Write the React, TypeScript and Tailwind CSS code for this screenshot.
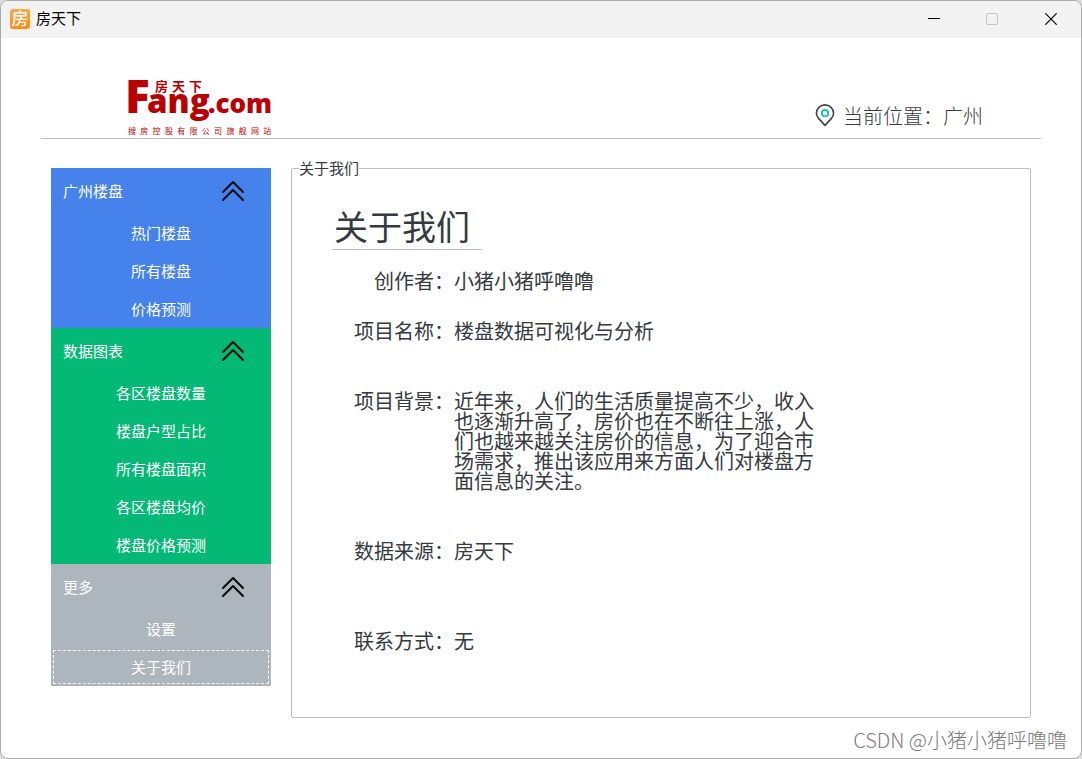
import { useState } from "react"

const groups = [
  {
    title: "广州楼盘",
    bg: "bg-[#4682eb]",
    items: ["热门楼盘", "所有楼盘", "价格预测"],
  },
  {
    title: "数据图表",
    bg: "bg-[#04b976]",
    items: ["各区楼盘数量", "楼盘户型占比", "所有楼盘面积", "各区楼盘均价", "楼盘价格预测"],
  },
  {
    title: "更多",
    bg: "bg-[#adb5bd]",
    items: ["设置", "关于我们"],
  },
]

const details = [
  { label: "创作者：", value: "小猪小猪呼噜噜", space: "mt-[21px]" },
  { label: "项目名称：", value: "楼盘数据可视化与分析", space: "mt-[30px]" },
  {
    label: "项目背景：",
    value:
      "近年来，人们的生活质量提高不少，收入也逐渐升高了，房价也在不断往上涨，人们也越来越关注房价的信息，为了迎合市场需求，推出该应用来方面人们对楼盘方面信息的关注。",
    space: "mt-[50px]",
  },
  { label: "数据来源：", value: "房天下", space: "mt-[50px]" },
  { label: "联系方式：", value: "无", space: "mt-[70px]" },
]

function TitleBar() {
  return (
    <div className="h-[37px] pb-0.5 bg-[#f3f3f3] flex items-center justify-between pl-[9px]">
      <div className="flex items-center gap-1.5">
        {/* App icon */}
        <svg className="w-5 h-5 overflow-visible" viewBox="0 0 20 20" aria-hidden="true">
          <defs>
            <linearGradient id="appIcon" x1="0" y1="0" x2="0" y2="1">
              <stop offset="0" stopColor="#f9a94b" />
              <stop offset="1" stopColor="#ff8a0c" />
            </linearGradient>
          </defs>
          <rect width="20" height="20" rx="3" fill="url(#appIcon)" />
          <text x="10" y="16" textAnchor="middle" fontSize="17" fontWeight="500" fill="#fff">
            房
          </text>
        </svg>
        <span className="text-[15px] leading-5 pb-0.5 text-black">房天下</span>
      </div>

      {/* Window controls */}
      <div className="flex self-stretch">
        <button aria-label="最小化" className="w-[58px] flex items-center justify-center">
          <svg className="w-3 h-3" viewBox="0 0 12 12" shapeRendering="crispEdges">
            <rect y="5" width="12" height="1" fill="#000" />
          </svg>
        </button>
        <button aria-label="最大化" disabled className="w-[58px] flex items-center justify-center">
          <svg className="w-3 h-3" viewBox="0 0 12 12" fill="none" stroke="#c4c4c4">
            <rect x="0.5" y="0.5" width="11" height="11" rx="1" />
          </svg>
        </button>
        <button aria-label="关闭" className="w-[60px] flex items-center justify-center">
          <svg className="w-3 h-3" viewBox="0 0 12 12" stroke="#000" strokeWidth="1.2">
            <path d="M0.3 0.3L11.7 11.7M11.7 0.3L0.3 11.7" />
          </svg>
        </button>
      </div>
    </div>
  )
}

function Logo() {
  return (
    <svg
      className="w-[150px] h-[60px] overflow-visible"
      viewBox="0 0 150 60"
      fill="#b90002"
      role="img"
      aria-label="房天下 Fang.com"
    >
      <g fontFamily="'Open Sans', sans-serif" fontWeight="800">
        <text x="0" y="39" fontSize="46">F</text>
        <text x="22" y="39" fontSize="33">ang</text>
        <text x="83" y="39" fontSize="26">.com</text>
      </g>
      <text x="30" y="17" fontSize="13" fontWeight="700">房</text>
      <text x="47" y="17" fontSize="13" fontWeight="700">天</text>
      <text x="64" y="17" fontSize="13" fontWeight="700">下</text>
      {"搜房控股有限公司旗舰网站".split("").map((c, i) => (
        <text key={i} x={3 + i * 12.3} y="60" fontSize="8">
          {c}
        </text>
      ))}
    </svg>
  )
}

export default function App() {
  const [active, setActive] = useState("关于我们")
  const [closed, setClosed] = useState<string[]>([])

  function toggle(title: string) {
    setClosed(closed.includes(title) ? closed.filter((t) => t !== title) : [...closed, title])
  }

  return (
    <div className="min-h-screen flex bg-[#dcdcdc] font-['Noto_Sans_CJK_SC',sans-serif]">
      <div className="flex-1 flex flex-col bg-white border border-[#ababab] rounded-lg overflow-hidden">
        <TitleBar />

        {/* Header */}
        <header className="mx-10 h-[101px] pl-[84px] pr-[58px] pt-9 flex justify-between border-b border-[#bdbdbd]">
          <Logo />
          <div className="flex items-center gap-2 self-end mb-2">
            <svg className="w-5 h-6" viewBox="0 0 20 24" fill="none">
              <path
                d="M10 21.4L3.8 14.6C2.2 12.8 1.4 11 1.4 9.2A8.6 8.3 0 0 1 18.6 9.2C18.6 11 17.8 12.8 16.2 14.6Z"
                stroke="#444"
                strokeWidth="1.6"
                strokeLinejoin="round"
              />
              <circle cx="10" cy="9.2" r="3.2" stroke="#1fc3a0" strokeWidth="1.8" />
            </svg>
            <span className="text-xl leading-7 font-light text-[#343a40]">当前位置：广州</span>
          </div>
        </header>

        <main className="flex-1 flex items-stretch gap-5 px-[50px] pt-[19px]">
          {/* Sidebar */}
          <nav className="w-[220px] shrink-0 mt-2.5 text-[15px] leading-5 text-white">
            {groups.map((group) => (
              <div key={group.title} className={group.bg}>
                <button
                  onClick={() => toggle(group.title)}
                  className="w-full h-[46px] pl-3 pr-[26px] flex items-center justify-between"
                >
                  <span>{group.title}</span>
                  <svg
                    className="w-6 h-6"
                    viewBox="0 0 24 24"
                    fill="none"
                    stroke="#0a0a0a"
                    strokeWidth="2"
                    strokeLinecap="round"
                    strokeLinejoin="round"
                  >
                    <path d="M2 13L12 3L22 13M2 21L12 11L22 21" />
                  </svg>
                </button>
                {!closed.includes(group.title) &&
                  group.items.map((item) => (
                    <button
                      key={item}
                      onClick={() => setActive(item)}
                      className={`block w-full h-[38px] text-center ${
                        item === active ? "outline-1 outline-dashed outline-white -outline-offset-3" : ""
                      }`}
                    >
                      {item}
                    </button>
                  ))}
              </div>
            ))}
          </nav>

          {/* Content */}
          <fieldset className="flex-1 min-w-0 pl-10 border border-[#bdbdbd] rounded-xs text-[#343a40]">
            <legend className="ml-[-33px] text-[15px] leading-5">关于我们</legend>
            <h1 className="w-[150px] mt-7 pb-[3px] pl-0.5 text-[34px] leading-10 border-b border-[#bdbdbd]">
              关于我们
            </h1>
            <dl className="text-xl leading-5">
              {details.map((row) => (
                <div key={row.label} className={`flex ${row.space}`}>
                  <dt className="w-[122px] shrink-0 text-right">{row.label}</dt>
                  <dd className="w-[360px]">{row.value}</dd>
                </div>
              ))}
            </dl>
          </fieldset>
        </main>

        {/* Signature */}
        <footer className="h-10 pt-1 pr-3.5 flex items-center justify-end text-xl leading-5 font-light text-[#7c7c7c]">
          CSDN @小猪小猪呼噜噜
        </footer>
      </div>
    </div>
  )
}
